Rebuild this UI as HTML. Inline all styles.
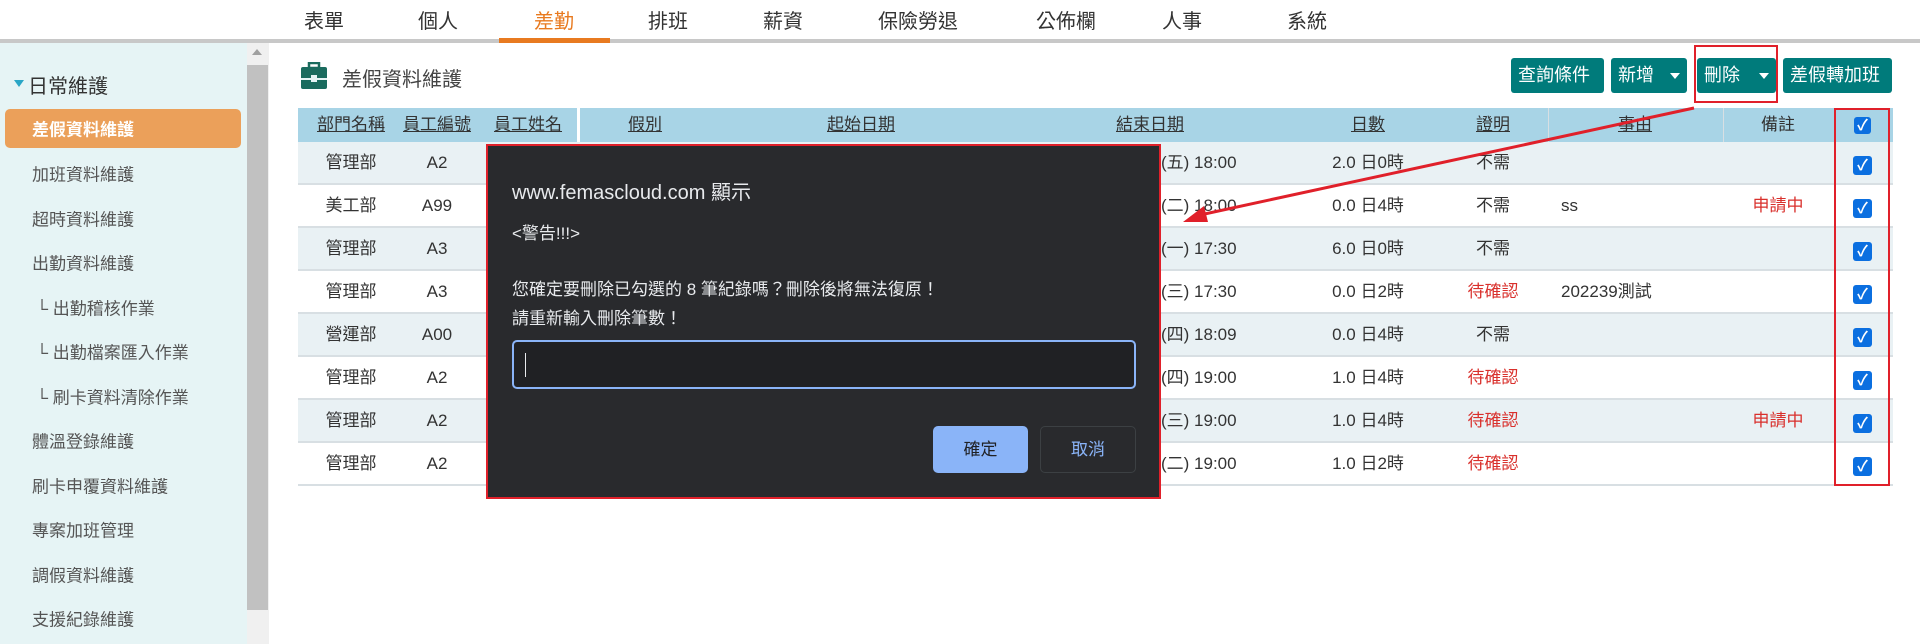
<!DOCTYPE html>
<html><head><meta charset="utf-8"><style>
*{box-sizing:border-box;margin:0;padding:0}
body{width:1920px;height:644px;overflow:hidden;background:#fff;font-family:"Liberation Sans","Noto Sans CJK TC",sans-serif;position:relative;color:#333}
.a{position:absolute;white-space:nowrap}
.nav{font-size:20px;top:5px;color:#333}
.side{position:absolute;left:0;top:43px;width:247px;height:601px;background:#e6f4f5}
.si{position:absolute;left:32px;font-size:17px;color:#555;transform:translateY(-50%)}
.btn{position:absolute;top:58px;height:35px;background:#007b7b;color:#fff;font-size:18px;line-height:35px;border-radius:3px;padding-left:7px}
.tri{display:inline-block;border-left:5px solid transparent;border-right:5px solid transparent;border-top:6px solid #fff;position:absolute;top:15px}
.row{position:absolute;left:298px;width:1595px;height:43px;border-bottom:2px solid #d8dfe3}
.c{position:absolute;font-size:17px;top:0;line-height:41px;transform:translateX(-50%);white-space:nowrap}
.l{position:absolute;font-size:17px;top:0;line-height:41px;white-space:nowrap}
.red{color:#d9302c}
.cb{position:absolute;left:1853px;width:19px;height:19px;background:#0b6fe0;border-radius:3px;color:#fff;font-size:15px;line-height:19px;text-align:center;font-weight:bold}
.th{position:absolute;font-size:17px;top:0;line-height:34px;transform:translateX(-50%);text-decoration:underline;color:#333;white-space:nowrap}
</style></head><body>
<div class="a nav" style="left:304px">表單</div>
<div class="a nav" style="left:418px">個人</div>
<div class="a nav" style="left:534px;color:#e87a20">差勤</div>
<div class="a nav" style="left:648px">排班</div>
<div class="a nav" style="left:763px">薪資</div>
<div class="a nav" style="left:878px">保險勞退</div>
<div class="a nav" style="left:1036px">公佈欄</div>
<div class="a nav" style="left:1162px">人事</div>
<div class="a nav" style="left:1287px">系統</div>
<div class="a" style="left:0;top:39px;width:1920px;height:4px;background:#c8c8c8"></div>
<div class="a" style="left:499px;top:38px;width:111px;height:5px;background:#e87a20"></div>

<div class="side"></div>
<div class="a" style="left:247px;top:43px;width:22px;height:601px;background:#f0f0f0"></div>
<div class="a" style="left:247px;top:65px;width:21px;height:545px;background:#c1c1c1"></div>
<div class="a" style="left:252px;top:49px;border-left:5px solid transparent;border-right:5px solid transparent;border-bottom:6px solid #a0a0a0"></div>
<div class="a" style="left:14px;top:80px;border-left:5px solid transparent;border-right:5px solid transparent;border-top:7px solid #2aa6c6"></div>
<div class="a" style="left:28px;top:70px;font-size:20px;color:#333">日常維護</div>
<div class="a" style="left:5px;top:109px;width:236px;height:39px;background:#eba05a;border-radius:5px"></div>
<div class="si" style="top:128px;color:#fff;font-weight:bold">差假資料維護</div>
<div class="si" style="top:173px">加班資料維護</div>
<div class="si" style="top:218px">超時資料維護</div>
<div class="si" style="top:262px">出勤資料維護</div>
<div class="si" style="top:307px;left:36px">└ 出勤稽核作業</div>
<div class="si" style="top:351px;left:36px">└ 出勤檔案匯入作業</div>
<div class="si" style="top:396px;left:36px">└ 刷卡資料清除作業</div>
<div class="si" style="top:440px">體溫登錄維護</div>
<div class="si" style="top:485px">刷卡申覆資料維護</div>
<div class="si" style="top:529px">專案加班管理</div>
<div class="si" style="top:574px">調假資料維護</div>
<div class="si" style="top:618px">支援紀錄維護</div>

<svg class="a" style="left:300px;top:62px" width="28" height="28" viewBox="0 0 28 28"><rect x="9" y="1" width="10" height="5" fill="none" stroke="#1a6b5e" stroke-width="2.5"/><rect x="1" y="5" width="26" height="22" rx="2" fill="#1a6b5e"/><rect x="1" y="16" width="26" height="2" fill="#e6f4f5"/><rect x="11" y="13" width="6" height="7" fill="#e6f4f5"/></svg>
<div class="a" style="left:342px;top:63px;font-size:20px;color:#444">差假資料維護</div>

<div class="btn" style="left:1511px;width:93px">查詢條件</div>
<div class="btn" style="left:1611px;width:76px">新增<span class="tri" style="left:59px"></span></div>
<div class="btn" style="left:1697px;width:79px">刪除<span class="tri" style="left:62px"></span></div>
<div class="btn" style="left:1783px;width:109px">差假轉加班</div>
<div class="a" style="left:1694px;top:45px;width:84px;height:58px;border:2px solid #e0202a"></div>

<div class="a" style="left:298px;top:108px;width:1595px;height:34px;background:#a8d4e6"></div>
<div class="a" style="left:577px;top:108px;width:3px;height:377px;background:#fff"></div>
<div class="a" style="left:1548px;top:108px;width:1px;height:377px;background:#d8dfe3"></div>
<div class="a" style="left:1723px;top:108px;width:1px;height:377px;background:#d8dfe3"></div>
<div class="a" style="left:1834px;top:108px;width:1px;height:377px;background:#d8dfe3"></div>
<div class="a" style="left:298px;top:108px;width:1595px;height:34px">
<span class="th" style="left:53px">部門名稱</span><span class="th" style="left:139px">員工編號</span><span class="th" style="left:230px">員工姓名</span><span class="th" style="left:347px">假別</span><span class="th" style="left:563px">起始日期</span><span class="th" style="left:852px">結束日期</span><span class="th" style="left:1070px">日數</span><span class="th" style="left:1195px">證明</span><span class="th" style="left:1337px">事由</span><span class="th" style="left:1480px;text-decoration:none">備註</span>
</div>
<div class="cb" style="top:117px;width:17px;height:17px;line-height:17px;left:1854px">✓</div>

<div class="row" style="top:142px;background:#e9f1f4"><span class="c" style="left:53px">管理部</span><span class="c" style="left:139px">A2</span><span class="l" style="left:863px">(五) 18:00</span><span class="c" style="left:1070px">2.0 日0時</span><span class="c" style="left:1195px">不需</span></div>
<div class="row" style="top:185px;background:#fff"><span class="c" style="left:53px">美工部</span><span class="c" style="left:139px">A99</span><span class="l" style="left:863px">(二) 18:00</span><span class="c" style="left:1070px">0.0 日4時</span><span class="c" style="left:1195px">不需</span><span class="l" style="left:1263px">ss</span><span class="c red" style="left:1480px">申請中</span></div>
<div class="row" style="top:228px;background:#e9f1f4"><span class="c" style="left:53px">管理部</span><span class="c" style="left:139px">A3</span><span class="l" style="left:863px">(一) 17:30</span><span class="c" style="left:1070px">6.0 日0時</span><span class="c" style="left:1195px">不需</span></div>
<div class="row" style="top:271px;background:#fff"><span class="c" style="left:53px">管理部</span><span class="c" style="left:139px">A3</span><span class="l" style="left:863px">(三) 17:30</span><span class="c" style="left:1070px">0.0 日2時</span><span class="c red" style="left:1195px">待確認</span><span class="l" style="left:1263px">202239測試</span></div>
<div class="row" style="top:314px;background:#e9f1f4"><span class="c" style="left:53px">營運部</span><span class="c" style="left:139px">A00</span><span class="l" style="left:863px">(四) 18:09</span><span class="c" style="left:1070px">0.0 日4時</span><span class="c" style="left:1195px">不需</span></div>
<div class="row" style="top:357px;background:#fff"><span class="c" style="left:53px">管理部</span><span class="c" style="left:139px">A2</span><span class="l" style="left:863px">(四) 19:00</span><span class="c" style="left:1070px">1.0 日4時</span><span class="c red" style="left:1195px">待確認</span></div>
<div class="row" style="top:400px;background:#e9f1f4"><span class="c" style="left:53px">管理部</span><span class="c" style="left:139px">A2</span><span class="l" style="left:863px">(三) 19:00</span><span class="c" style="left:1070px">1.0 日4時</span><span class="c red" style="left:1195px">待確認</span><span class="c red" style="left:1480px">申請中</span></div>
<div class="row" style="top:443px;background:#fff"><span class="c" style="left:53px">管理部</span><span class="c" style="left:139px">A2</span><span class="l" style="left:863px">(二) 19:00</span><span class="c" style="left:1070px">1.0 日2時</span><span class="c red" style="left:1195px">待確認</span></div>
<div class="cb" style="top:156px">✓</div><div class="cb" style="top:199px">✓</div><div class="cb" style="top:242px">✓</div><div class="cb" style="top:285px">✓</div><div class="cb" style="top:328px">✓</div><div class="cb" style="top:371px">✓</div><div class="cb" style="top:414px">✓</div><div class="cb" style="top:457px">✓</div>
<div class="a" style="left:1834px;top:108px;width:56px;height:378px;border:2px solid #e0202a"></div>

<div class="a" style="left:486px;top:144px;width:675px;height:355px;background:#292a2d;border:2px solid #e0202a"></div>
<div class="a" style="left:512px;top:176px;font-size:20px;color:#e8eaed">www.femascloud.com 顯示</div>
<div class="a" style="left:512px;top:219px;font-size:17px;color:#e8eaed">&lt;警告!!!&gt;</div>
<div class="a" style="left:512px;top:275px;font-size:17px;color:#e8eaed">您確定要刪除已勾選的 8 筆紀錄嗎？刪除後將無法復原！</div>
<div class="a" style="left:512px;top:304px;font-size:17px;color:#e8eaed">請重新輸入刪除筆數！</div>
<div class="a" style="left:512px;top:340px;width:624px;height:49px;background:#202124;border:2px solid #8ab4f8;border-radius:5px"></div>
<div class="a" style="left:525px;top:353px;width:1px;height:24px;background:#e8eaed"></div>
<div class="a" style="left:933px;top:426px;width:95px;height:47px;background:#8ab4f8;border-radius:5px;font-size:17px;color:#202124;text-align:center;line-height:47px">確定</div>
<div class="a" style="left:1040px;top:426px;width:96px;height:47px;border:1px solid #3c4043;border-radius:5px;font-size:17px;color:#8ab4f8;text-align:center;line-height:45px">取消</div>

<svg class="a" style="left:0;top:0" width="1920" height="644"><line x1="1694" y1="108" x2="1200" y2="215" stroke="#e0202a" stroke-width="3"/><polygon points="1183,222 1204,206 1208,222" fill="#e0202a"/></svg>
</body></html>
